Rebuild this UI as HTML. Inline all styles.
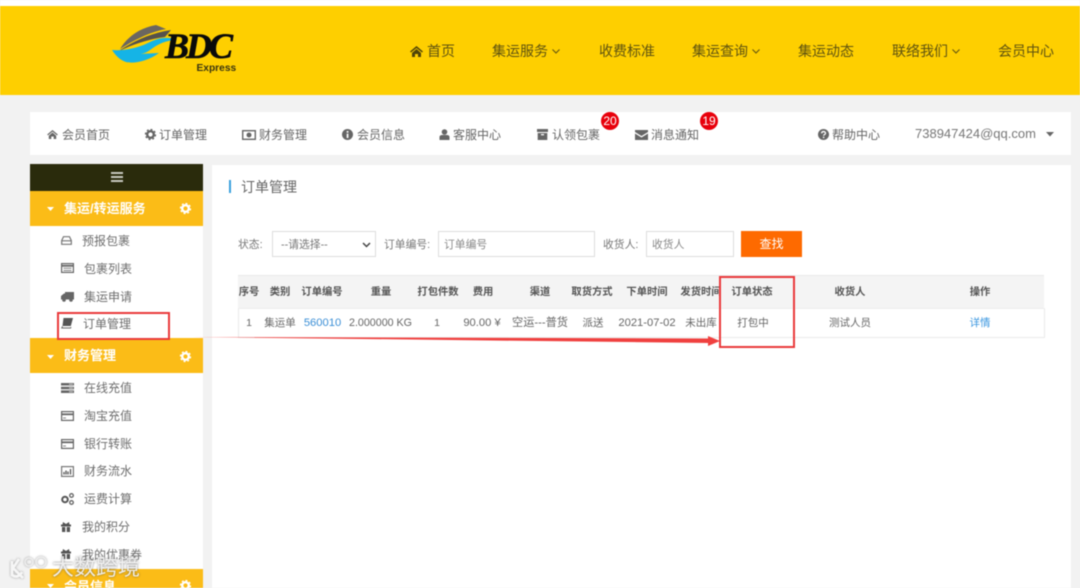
<!DOCTYPE html>
<html lang="zh"><head><meta charset="utf-8"><title>订单管理</title>
<style>
html,body{margin:0;padding:0;background:#f2f2f2}
#p{position:relative;width:1080px;height:588px;overflow:hidden;background:#f2f2f2;font-family:"Liberation Sans","Noto Sans CJK SC",sans-serif;filter:blur(.45px)}
.b{position:absolute}
.t{position:absolute;white-space:nowrap;line-height:20px;height:20px;color:#666}
.n{font-size:14px;color:#5f5310}
.s{font-size:12px;color:#666}
.m{font-size:12px;color:#6e6e6e}
.h{color:#fff;font-weight:bold;font-size:13px}
.th{font-size:10.3px;color:#555;font-weight:bold;transform:translateX(-50%)}
.td{font-size:10.5px;color:#666;transform:translateX(-50%)}
.w{font-size:11.200px}
.l{font-size:10.800px;color:#777}
svg{position:absolute;overflow:visible}
</style></head><body><div id="p">
<div class="b" style="left:0;top:0;width:1080px;height:6px;background:#fff"></div>
<div class="b" style="left:0;top:6px;width:1080px;height:89px;background:#fecf00"></div>

<svg style="left:0;top:0" width="300" height="94">
<path d="M120 49C128 36 140 28 156 25L166 29C150 32 134 40 120 49Z" fill="#6b6660"/>
<path d="M119 51C132 42 150 33 171 30L165 37C148 39 132 45 119 51Z" fill="#55524c"/>
<path d="M112 50C125 51 138 48 150 42C158 38 168 36 177 40C166 40 158 44 150 50C146 53 142 54 139 54L159 53C148 61 134 64 126 62C120 60 116 56 112 50Z" fill="#15b4e6"/>
</svg>
<div class="t" style="left:165px;top:31px;font:italic bold 36px/30px 'Liberation Serif',serif;color:#0a0a0a;height:30px;letter-spacing:-3px;-webkit-text-stroke:.6px #0a0a0a">BDC</div>
<div class="t" style="left:196.500px;top:58.500px;font-size:10.200px;font-weight:bold;color:#3a3510">Express</div>

<svg style="left:410px;top:46px" width="13" height="11" viewBox="0 0 13 11"><path d="M6.500 0L13 5.500 12 6.500 6.500 2 1 6.500 0 5.500ZM2 7L6.500 3 11 7V11H8V8H5V11H2Z" fill="#4f4408"/></svg>
<div class="t n" style="left:427px;top:41px">首页</div>
<div class="t n" style="left:492px;top:41px">集运服务</div>
<svg style="left:552px;top:49px" width="8" height="5"><path d="M.5.5L4 4 7.500.5" fill="none" stroke="#5f5310"/></svg>
<div class="t n" style="left:599px;top:41px">收费标准</div>
<div class="t n" style="left:692px;top:41px">集运查询</div>
<svg style="left:752px;top:49px" width="8" height="5"><path d="M.5.5L4 4 7.500.5" fill="none" stroke="#5f5310"/></svg>
<div class="t n" style="left:798px;top:41px">集运动态</div>
<div class="t n" style="left:892px;top:41px">联络我们</div>
<svg style="left:952px;top:49px" width="8" height="5"><path d="M.5.5L4 4 7.500.5" fill="none" stroke="#5f5310"/></svg>
<div class="t n" style="left:998px;top:41px">会员中心</div>

<div class="b" style="left:30px;top:112px;width:1041px;height:43px;background:#fff"></div>
<svg style="left:47px;top:130px" width="11" height="9" viewBox="0 0 13 11"><path d="M6.500 0L13 5.500 12 6.500 6.500 2 1 6.500 0 5.500ZM2 7L6.500 3 11 7V11H8V8H5V11H2Z" fill="#666"/></svg>
<div class="t s" style="left:62px;top:125px">会员首页</div>
<svg style="left:145px;top:129px" width="11" height="11" viewBox="0 0 11 11"><circle cx="5.500" cy="5.500" r="3.300" fill="none" stroke="#666" stroke-width="2.400"/><circle cx="5.500" cy="5.500" r="5" fill="none" stroke="#666" stroke-width="1.300" stroke-dasharray="2 1.900"/></svg>
<div class="t s" style="left:159px;top:125px">订单管理</div>
<svg style="left:242px;top:130px" width="14" height="10"><rect x=".7" y=".7" width="12.600" height="8.600" fill="none" stroke="#666" stroke-width="1.400"/><circle cx="7" cy="5" r="2.500" fill="#666"/></svg>
<div class="t s" style="left:259px;top:125px">财务管理</div>
<svg style="left:342px;top:129px" width="11" height="11"><circle cx="5.500" cy="5.500" r="5.500" fill="#666"/><rect x="4.700" y="2" width="1.700" height="1.700" fill="#fff"/><rect x="4.700" y="4.700" width="1.700" height="4.300" fill="#fff"/></svg>
<div class="t s" style="left:357px;top:125px">会员信息</div>
<svg style="left:439px;top:129px" width="11" height="11"><circle cx="5.500" cy="3" r="2.800" fill="#666"/><path d="M.5 11V8C.5 6.500 2 6 3 6H8C9 6 10.500 6.500 10.500 8V11Z" fill="#666"/></svg>
<div class="t s" style="left:453px;top:125px">客服中心</div>
<svg style="left:537px;top:129px" width="11" height="11"><path d="M0 0H11V3H0ZM.7 4H10.300V11H.7Z" fill="#666"/><rect x="4" y="5" width="3" height="1.300" fill="#fff"/></svg>
<div class="t s" style="left:552px;top:125px">认领包裹</div>
<svg style="left:635px;top:130px" width="13" height="10"><path d="M0 0H13V2L6.500 6 0 2ZM0 3.500L6.500 7.500 13 3.500V10H0Z" fill="#666"/></svg>
<div class="t s" style="left:651px;top:125px">消息通知</div>
<div class="b" style="left:601px;top:112px;width:18px;height:18px;border-radius:50%;background:#e8000b;color:#fff;font-size:12px;line-height:18px;text-align:center">20</div>
<div class="b" style="left:700px;top:112px;width:18px;height:18px;border-radius:50%;background:#e8000b;color:#fff;font-size:12px;line-height:18px;text-align:center">19</div>
<svg style="left:818px;top:129px" width="11" height="11"><circle cx="5.500" cy="5.500" r="5.500" fill="#666"/><path d="M3.600 4.300C3.700 2 7.500 2 7.500 4.200 7.500 5.500 5.600 5.500 5.600 6.800" fill="none" stroke="#fff" stroke-width="1.300"/><rect x="4.900" y="7.700" width="1.400" height="1.400" fill="#fff"/></svg>
<div class="t s" style="left:832px;top:125px">帮助中心</div>
<div class="t" style="left:915px;top:124px;font-size:13px;color:#777">738947424@qq.com</div>
<svg style="left:1046px;top:132px" width="8" height="5"><path d="M0 0H8L4 4.500Z" fill="#666"/></svg>

<div class="b" style="left:30px;top:164px;width:173px;height:424px;background:#fff"></div>
<div class="b" style="left:30px;top:164px;width:173px;height:27px;background:#2a2b0c"></div>
<div class="b" style="left:111px;top:172px;width:12px;height:2px;background:#c8c8c0;box-shadow:0 4px 0 #c8c8c0,0 8px 0 #c8c8c0"></div>
<div class="b" style="left:30px;top:191px;width:173px;height:35px;background:#fbbc17"></div>
<div class="b" style="left:30px;top:338px;width:173px;height:35px;background:#fbbc17"></div>
<div class="b" style="left:30px;top:569px;width:173px;height:19px;background:#fbbc17"></div>

<svg style="left:47px;top:207px" width="7" height="4"><path d="M0 0H7L3.500 4Z" fill="#fff"/></svg>
<svg style="left:47px;top:355px" width="7" height="4"><path d="M0 0H7L3.500 4Z" fill="#fff"/></svg>
<svg style="left:47px;top:584px" width="7" height="4"><path d="M0 0H7L3.500 4Z" fill="#fff"/></svg>
<div class="t h" style="left:64px;top:199px">集运/转运服务</div>
<div class="t h" style="left:64px;top:346px">财务管理</div>
<div class="t h" style="left:64px;top:577px">会员信息</div>
<svg style="left:180px;top:203px" width="11" height="11" viewBox="0 0 11 11"><circle cx="5.500" cy="5.500" r="3.300" fill="none" stroke="#fff" stroke-width="2.400"/><circle cx="5.500" cy="5.500" r="5" fill="none" stroke="#fff" stroke-width="1.300" stroke-dasharray="2 1.900"/></svg>
<svg style="left:180px;top:351px" width="11" height="11" viewBox="0 0 11 11"><circle cx="5.500" cy="5.500" r="3.300" fill="none" stroke="#fff" stroke-width="2.400"/><circle cx="5.500" cy="5.500" r="5" fill="none" stroke="#fff" stroke-width="1.300" stroke-dasharray="2 1.900"/></svg>
<svg style="left:180px;top:580px" width="11" height="11" viewBox="0 0 11 11"><circle cx="5.500" cy="5.500" r="3.300" fill="none" stroke="#fff" stroke-width="2.400"/><circle cx="5.500" cy="5.500" r="5" fill="none" stroke="#fff" stroke-width="1.300" stroke-dasharray="2 1.900"/></svg>

<svg style="left:61px;top:236px" width="11" height="9"><path d="M2.500.7H8.500L10.300 4.500V8.300H.7V4.500ZM.7 4.800H10.300" fill="none" stroke="#777" stroke-width="1.200"/></svg>
<div class="t m" style="left:82px;top:231px">预报包裹</div>
<svg style="left:61px;top:263px" width="13" height="10"><rect x=".6" y=".6" width="11.800" height="8.800" fill="none" stroke="#666" stroke-width="1.200"/><path d="M1 2.800H12" stroke="#666" stroke-width="1.800"/><path d="M2.500 5.300H10.500M2.500 7.500H10.500" stroke="#888"/></svg>
<div class="t m" style="left:84px;top:259px">包裹列表</div>
<svg style="left:61px;top:291px" width="13" height="11"><path d="M4 1H13V8.500H4ZM0 5L3 2.500H4V8.500H0Z" fill="#666"/><circle cx="3" cy="9" r="1.800" fill="#666"/><circle cx="10" cy="9" r="1.800" fill="#666"/></svg>
<div class="t m" style="left:84px;top:287px">集运申请</div>
<svg style="left:61px;top:318px" width="12" height="11"><path d="M2.500 0H12L9.800 8H1.500Z" fill="#555"/><path d="M1.500 8.300L.8 10H9.600L10 9" fill="none" stroke="#666"/></svg>
<div class="t m" style="left:83px;top:314px">订单管理</div>

<svg style="left:61px;top:383px" width="13" height="10"><path d="M0 0H13V2.500H0ZM0 3.700H13V6.200H0ZM0 7.400H13V10H0Z" fill="#666"/><path d="M8 1.200H12M8 5H12M8 8.700H12" stroke="#ccc"/></svg>
<div class="t m" style="left:84px;top:378px">在线充值</div>
<svg style="left:61px;top:411px" width="13" height="10"><rect x=".6" y=".6" width="11.800" height="8.800" fill="none" stroke="#666" stroke-width="1.200"/><path d="M1 3.300H12" stroke="#666" stroke-width="1.800"/><path d="M2 7H5" stroke="#888"/></svg>
<div class="t m" style="left:84px;top:406px">淘宝充值</div>
<svg style="left:61px;top:439px" width="13" height="10"><rect x=".6" y=".6" width="11.800" height="8.800" fill="none" stroke="#666" stroke-width="1.200"/><path d="M1 3.300H12" stroke="#666" stroke-width="1.800"/><path d="M2 7H5" stroke="#888"/></svg>
<div class="t m" style="left:84px;top:434px">银行转账</div>
<svg style="left:61px;top:466px" width="13" height="11"><rect x=".6" y=".6" width="11.800" height="9.800" fill="none" stroke="#777" stroke-width="1.200"/><path d="M3 8.500V6M5 8.500V4.500M7 8.500V5.500M9.500 8.500V3" stroke="#555" stroke-width="1.300"/></svg>
<div class="t m" style="left:84px;top:461px">财务流水</div>
<svg style="left:61px;top:493px" width="13" height="12"><circle cx="4" cy="6.500" r="2.800" fill="none" stroke="#555" stroke-width="2"/><circle cx="10.500" cy="2.500" r="1.800" fill="none" stroke="#666" stroke-width="1.300"/><circle cx="10.500" cy="9.500" r="1.800" fill="none" stroke="#666" stroke-width="1.300"/></svg>
<div class="t m" style="left:84px;top:489px">运费计算</div>
<svg style="left:61px;top:522px" width="10" height="10"><path d="M0 2.500H10V4.500H0ZM1 5H4.300V10H1ZM5.700 5H9V10H5.700ZM2 0L5 2 8 0 8.500 2.500H1.500Z" fill="#555"/></svg>
<div class="t m" style="left:82px;top:517px">我的积分</div>
<svg style="left:61px;top:549px" width="10" height="10"><path d="M0 2.500H10V4.500H0ZM1 5H4.300V10H1ZM5.700 5H9V10H5.700ZM2 0L5 2 8 0 8.500 2.500H1.500Z" fill="#555"/></svg>
<div class="t m" style="left:82px;top:545px">我的优惠券</div>

<div class="b" style="left:212px;top:165px;width:859px;height:423px;background:#fff"></div>
<div class="b" style="left:229px;top:180px;width:2px;height:13px;background:#3aa0dc"></div>
<div class="t" style="left:241px;top:177px;font-size:14px;color:#666">订单管理</div>

<div class="t l" style="left:238px;top:235px">状态:</div>
<div class="b" style="left:272px;top:231px;width:104px;height:26px;box-sizing:border-box;border:1px solid #ddd;background:#fff"></div>
<div class="t l" style="left:281px;top:235px">--请选择--</div>
<svg style="left:362px;top:242px" width="9" height="6"><path d="M1 1L4.500 4.500 8 1" fill="none" stroke="#444" stroke-width="1.500"/></svg>
<div class="t l" style="left:384px;top:235px">订单编号:</div>
<div class="b" style="left:438px;top:231px;width:157px;height:26px;box-sizing:border-box;border:1px solid #ddd;background:#fff"></div>
<div class="t l" style="left:444px;top:235px;color:#888">订单编号</div>
<div class="t l" style="left:603px;top:235px">收货人:</div>
<div class="b" style="left:646px;top:231px;width:88px;height:26px;box-sizing:border-box;border:1px solid #ddd;background:#fff"></div>
<div class="t l" style="left:652px;top:235px;color:#888">收货人</div>
<div class="b" style="left:741px;top:231px;width:61px;height:26px;background:#fe6a00;color:#fff;font-size:12px;line-height:26px;text-align:center">查找</div>

<div class="b" style="left:238px;top:275px;width:806px;height:33px;background:#f4f4f4;border-top:1px solid #e8e8e8;box-sizing:border-box"></div>
<div class="b" style="left:238px;top:308px;width:807px;height:30px;box-sizing:border-box;border:1px solid #eaeaea;border-top-color:#eee;background:#fff"></div>
<div class="t th" style="left:249px;top:283px">序号</div>
<div class="t th" style="left:280px;top:283px">类别</div>
<div class="t th" style="left:322px;top:283px">订单编号</div>
<div class="t th" style="left:381px;top:283px">重量</div>
<div class="t th" style="left:438px;top:283px">打包件数</div>
<div class="t th" style="left:483px;top:283px">费用</div>
<div class="t th" style="left:540px;top:283px">渠道</div>
<div class="t th" style="left:592px;top:283px">取货方式</div>
<div class="t th" style="left:647px;top:283px">下单时间</div>
<div class="t th" style="left:701px;top:283px">发货时间</div>
<div class="t th" style="left:752px;top:283px">订单状态</div>
<div class="t th" style="left:850px;top:283px">收货人</div>
<div class="t th" style="left:980px;top:283px">操作</div>

<div class="t td" style="left:249px;top:313px">1</div>
<div class="t td" style="left:280px;top:313px">集运单</div>
<div class="t td w" style="left:322.500px;top:313px;color:#3b8fd6">560010</div>
<div class="t td" style="left:380.500px;top:313px;font-size:10.700px">2.000000 KG</div>
<div class="t td" style="left:437px;top:313px">1</div>
<div class="t td w" style="left:482px;top:313px">90.00 ¥</div>
<div class="t td w" style="left:540px;top:313px">空运---普货</div>
<div class="t td" style="left:593px;top:313px">派送</div>
<div class="t td w" style="left:647px;top:313px">2021-07-02</div>
<div class="t td" style="left:701px;top:313px">未出库</div>
<div class="t td" style="left:753px;top:313px">打包中</div>
<div class="t td" style="left:850px;top:313px">测试人员</div>
<div class="t td" style="left:980px;top:313px;color:#3b97e0">详情</div>

<div class="b" style="left:57px;top:312px;width:113px;height:28px;box-sizing:border-box;border:2px solid #ea3a3c"></div>
<div class="b" style="left:719px;top:276px;width:76px;height:72px;box-sizing:border-box;border:2px solid #ea3a3c"></div>
<svg style="left:0;top:0" width="1080" height="588"><path d="M192 337L708 338.500V336L720 341 708 346V343Z" fill="#f0403f"/></svg>

<svg style="left:8px;top:553px;filter:drop-shadow(0 0 1px rgba(80,80,80,.55))" width="40" height="30"><g fill="none" stroke="#f6f6f6" stroke-width="2.800"><path d="M4 8V22C8 25 12 23 14 19M11 6L5 15 15 25"/></g><g fill="none" stroke="#eee" stroke-width="1.600"><circle cx="21" cy="9" r="4"/><circle cx="33" cy="9" r="5"/></g></svg>
<div class="t" style="left:52px;top:554px;font-size:22px;line-height:28px;height:28px;color:rgba(248,248,248,.9);text-shadow:0 0 2px rgba(60,60,60,.7);letter-spacing:0">大数跨境</div>
</div></body></html>
